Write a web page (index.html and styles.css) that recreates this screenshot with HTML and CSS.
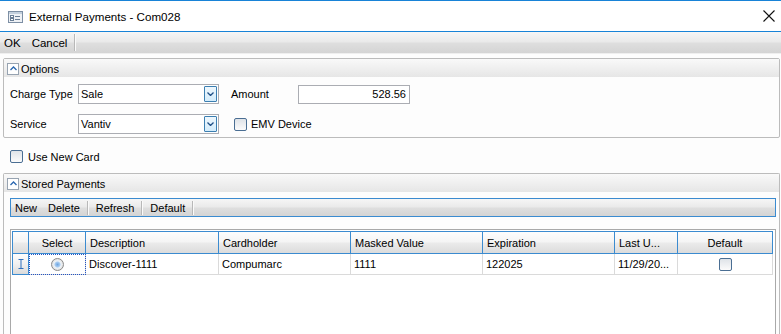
FILE: index.html
```html
<!DOCTYPE html>
<html>
<head>
    <title>External Payments - Com028</title>
    <link rel="stylesheet" href="styles.css">
</head>
<body>
    <div class="titlebar">
        <svg class="app-icon" width="15" height="12" viewBox="0 0 15 12">
            <rect x="0.5" y="0.5" width="14" height="11" fill="#eef1f5" stroke="#7d8fa4"/>
            <rect x="1" y="1" width="13" height="2" fill="#c3d0dd"/>
            <rect x="2.5" y="4.5" width="3" height="2" fill="#fff" stroke="#6a7e95"/>
            <rect x="2.5" y="7.5" width="3" height="2" fill="#fff" stroke="#6a7e95"/>
            <path d="M7 5.5h5M7 8.5h5" stroke="#6a7e95"/>
        </svg>
        <span class="title">External Payments - Com028</span>
        <svg class="close" width="12" height="12" viewBox="0 0 12 12">
            <path d="M0.5 0.5L11.5 11.5M11.5 0.5L0.5 11.5" stroke="#111" stroke-width="1.1"/>
        </svg>
    </div>

    <div class="toolbar main-tools">
        <span class="tool">OK</span>
        <span class="tool">Cancel</span>
        <span class="sep"></span>
    </div>

    <div class="content">
        <div class="group options">
            <div class="group-head">
                <span class="collapse"><svg width="7" height="5" viewBox="0 0 7 5"><path d="M0.5 4L3.5 1L6.5 4" fill="none" stroke="#2a67b0" stroke-width="1.3"/></svg></span>
                Options
            </div>
            <div class="group-body">
                <div class="form-row">
                    <span class="lbl">Charge Type</span>
                    <div class="combo">
                        <span class="combo-text">Sale</span>
                        <span class="drop"><svg width="7" height="4" viewBox="0 0 7 4"><path d="M0.5 0.5L3.5 3.5L6.5 0.5" fill="none" stroke="#1f4f86" stroke-width="1.3"/></svg></span>
                    </div>
                    <span class="lbl lbl-amount">Amount</span>
                    <div class="textbox">528.56</div>
                </div>
                <div class="form-row">
                    <span class="lbl">Service</span>
                    <div class="combo">
                        <span class="combo-text">Vantiv</span>
                        <span class="drop"><svg width="7" height="4" viewBox="0 0 7 4"><path d="M0.5 0.5L3.5 3.5L6.5 0.5" fill="none" stroke="#1f4f86" stroke-width="1.3"/></svg></span>
                    </div>
                    <label class="check emv"><span class="box"></span>EMV Device</label>
                </div>
            </div>
        </div>

        <label class="check new-card"><span class="box"></span>Use New Card</label>

        <div class="group stored">
            <div class="group-head">
                <span class="collapse"><svg width="7" height="5" viewBox="0 0 7 5"><path d="M0.5 4L3.5 1L6.5 4" fill="none" stroke="#2a67b0" stroke-width="1.3"/></svg></span>
                Stored Payments
            </div>
            <div class="group-body">
                <div class="toolbar grid-tools">
                    <span class="tool">New</span>
                    <span class="tool">Delete</span>
                    <span class="sep"></span>
                    <span class="tool">Refresh</span>
                    <span class="sep"></span>
                    <span class="tool">Default</span>
                    <span class="sep"></span>
                </div>

                <div class="grid">
                    <div class="gh row-head"></div>
                    <div class="gh center">Select</div>
                    <div class="gh">Description</div>
                    <div class="gh">Cardholder</div>
                    <div class="gh">Masked Value</div>
                    <div class="gh">Expiration</div>
                    <div class="gh">Last U...</div>
                    <div class="gh center">Default</div>

                    <div class="gd row-head"><svg width="6" height="10" viewBox="0 0 6 10"><path d="M0.5 0.5h5M3 0.5v9M0.5 9.5h5" fill="none" stroke="#2f6fbd"/></svg></div>
                    <div class="gd center focus"><span class="radio"></span></div>
                    <div class="gd">Discover-1111</div>
                    <div class="gd">Compumarc</div>
                    <div class="gd">1111</div>
                    <div class="gd">122025</div>
                    <div class="gd">11/29/20...</div>
                    <div class="gd center"><span class="box"></span></div>
                </div>
            </div>
        </div>
    </div>
</body>
</html>
```

FILE: styles.css
```css
body {
    margin: 0;
    width: 781px;
    height: 334px;
    overflow: hidden;
    display: flex;
    flex-direction: column;
    font-family: "Liberation Sans", Arial, sans-serif;
    font-size: 11px;
    color: #000;
    background-color: #fdfdfd;
}
.titlebar {
    height: 30px;
    flex-shrink: 0;
    display: flex;
    align-items: center;
    padding: 0 6px 0 8px;
    background-color: #fff;
    border-top: 1px solid #1883d7;
    border-bottom: 1px solid #1883d7;
}
.app-icon {
    margin-top: 2px;
}
.title {
    margin-left: 6px;
    font-size: 11.6px;
}
.close {
    margin-left: auto;
}
.toolbar {
    display: flex;
    align-items: center;
    flex-shrink: 0;
    background: linear-gradient(#f6f6f6, #eaeaea 45%, #dedede 55%, #d4d4d4);
}
.main-tools {
    height: 21px;
    border-bottom: 1px solid #efefef;
}
.tool {
    padding: 0 4px;
    margin-right: 3px;
}
.main-tools .tool {
    font-size: 11.5px;
}
.sep {
    width: 0;
    height: 17px;
    border-left: 1px solid #b8b8b8;
    border-right: 1px solid #fafafa;
    margin-right: 3px;
}
.content {
    flex: 1;
    min-height: 0;
    display: flex;
    flex-direction: column;
    padding: 4px 1px 0 3px;
}
.group {
    border: 1px solid #bcbcbc;
    border-radius: 2px;
    background-color: #fdfdfd;
}
.group-head {
    height: 18px;
    display: flex;
    align-items: center;
    padding-left: 3px;
    padding-top: 1px;
    box-sizing: border-box;
    background: linear-gradient(#f9f9f9, #e6e6e6);
}
.collapse {
    width: 12px;
    height: 12px;
    box-sizing: border-box;
    border: 1px solid #97a3b1;
    background-color: #fff;
    display: flex;
    align-items: center;
    justify-content: center;
    margin-right: 2px;
}
.options .group-body {
    display: flex;
    flex-direction: column;
    gap: 10px;
    padding: 7px 0 3px 6px;
}
.form-row {
    display: flex;
    align-items: center;
    height: 20px;
}
.lbl {
    width: 68px;
}
.lbl-amount {
    width: 67px;
    margin-left: 12px;
}
.combo {
    width: 141px;
    height: 20px;
    box-sizing: border-box;
    border: 1px solid #abadb3;
    background-color: #fff;
    display: flex;
    padding: 1px;
}
.combo-text {
    flex: 1;
    padding-left: 1px;
    line-height: 16px;
}
.drop {
    width: 13px;
    height: 16px;
    box-sizing: border-box;
    border: 1px solid #3c7fb1;
    border-radius: 1px;
    background: linear-gradient(#eef7fd, #d3ecfb);
    display: flex;
    align-items: center;
    justify-content: center;
}
.textbox {
    width: 112px;
    height: 19px;
    box-sizing: border-box;
    border: 1px solid #abadb3;
    background-color: #fff;
    text-align: right;
    padding-right: 3px;
    line-height: 17px;
}
.check {
    display: flex;
    align-items: center;
}
.box {
    display: inline-block;
    width: 13px;
    height: 13px;
    box-sizing: border-box;
    border: 1px solid #4a6e93;
    border-radius: 2px;
    background: linear-gradient(#dfe3e8, #fbfbfb);
}
.emv {
    margin-left: 15px;
}
.emv .box {
    margin-right: 4px;
}
.new-card {
    margin: 12px 0 10px 7px;
    height: 13px;
}
.new-card .box {
    margin-right: 5px;
}
.stored {
    flex: 1;
    display: flex;
    flex-direction: column;
    border-bottom: none;
    border-radius: 2px 2px 0 0;
}
.stored .group-body {
    flex: 1;
    display: flex;
    flex-direction: column;
    padding: 6px 3px 0 6px;
}
.grid-tools {
    height: 19px;
    box-sizing: border-box;
    border: 1px solid #3b8bd0;
}
.grid-tools .sep {
    height: 14px;
}
.grid {
    flex: 1;
    margin-top: 12px;
    border: 1px solid #a9a9a9;
    border-bottom: none;
    padding: 1px;
    background-color: #fff;
    display: grid;
    grid-template-columns: 17px 57px 133px 132px 132px 132px 63px 95px;
    grid-template-rows: 23px 21px;
    align-content: start;
}
.gh, .gd {
    display: flex;
    align-items: center;
    box-sizing: border-box;
    white-space: nowrap;
    overflow: hidden;
}
.gh {
    padding-left: 4px;
    background: linear-gradient(#fdfdfd, #f5f5f5 45%, #eaeaea 55%, #dcdcdc);
    border-top: 1px solid #3b8bd0;
    border-bottom: 1px solid #3b8bd0;
    border-right: 1px solid #3b8bd0;
}
.gd {
    padding-left: 3px;
    border-right: 1px solid #dadada;
    border-bottom: 1px solid #dadada;
}
.center {
    justify-content: center;
    padding-left: 0;
}
.row-head {
    padding-left: 0;
    justify-content: center;
    border-left: 1px solid #3b8bd0;
}
.gd.row-head {
    background: linear-gradient(#fdfdfd, #f1f1f1 50%, #dadada);
    border-right: 1px solid #3b8bd0;
    border-bottom: 1px solid #3b8bd0;
}
.focus {
    outline: 1px dotted #2253c4;
    outline-offset: -1px;
}
.radio {
    width: 13px;
    height: 13px;
    box-sizing: border-box;
    border: 1px solid #8a8a8a;
    border-radius: 50%;
    background: radial-gradient(circle, #6fa6e0 0, #a9cdf2 2.5px, #eef2f6 3.5px, #dedede 6px);
}
```
